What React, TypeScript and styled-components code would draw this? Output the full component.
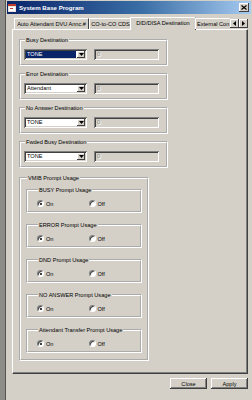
import React from "react";
import styled, { createGlobalStyle } from "styled-components";

const GlobalStyle = createGlobalStyle`
  html, body {
    margin: 0;
    padding: 0;
    background: #8e8d8a;
  }
  body {
    font-family: "Liberation Sans", Arial, sans-serif;
    font-size: 5.6px;
  }
`;

const Window = styled.div`
  box-sizing: border-box;
  margin-left: 5px;
  width: 247px;
  height: 400px;
  background: #d4d0c8;
  border-left: 1px solid #55544f;
  padding: 1px 0 0 1px;
  display: flex;
  flex-direction: column;
`;

const TitleBar = styled.div`
  height: 13px;
  margin-right: 1px;
  background: linear-gradient(90deg, #0a246a 0%, #3a6ea5 55%, #a6caf0 100%);
  display: flex;
  align-items: center;
  padding: 0 2px 0 1px;
  gap: 3px;
`;

const Title = styled.span`
  flex: 1;
  color: #fff;
  font-weight: bold;
  font-size: 6.1px;
`;

const CloseBox = styled.div`
  width: 10px;
  height: 9px;
  background: #d4d0c8;
  box-shadow: inset -1px -1px #404040, inset 1px 1px #fff;
  display: flex;
  align-items: center;
  justify-content: center;
`;

const Body = styled.div`
  flex: 1;
  display: flex;
  flex-direction: column;
  padding: 1px 0 0 5px;
`;

const TabRow = styled.div`
  height: 14px;
  display: flex;
  align-items: flex-end;
  padding-left: 2px;
  position: relative;
  z-index: 1;
`;

const Tab = styled.div<{ $w: number; $active?: boolean }>`
  box-sizing: border-box;
  flex: none;
  width: ${(p) => p.$w}px;
  height: ${(p) => (p.$active ? 13 : 11)}px;
  margin: ${(p) => (p.$active ? "0 -1px -1px -2px" : "0")};
  background: #d4d0c8;
  border-left: 1px solid #fff;
  border-top: 1px solid #fff;
  border-right: 1px solid #404040;
  border-radius: 1px 1px 0 0;
  display: flex;
  align-items: center;
  justify-content: center;
  white-space: nowrap;
  color: #000;
  padding-bottom: ${(p) => (p.$active ? 2 : 0)}px;
`;

const ClippedTab = styled(Tab)`
  justify-content: flex-start;
  padding-left: 1px;
  border-right: none;
`;

const ArrowBtn = styled.div`
  flex: none;
  width: 9px;
  height: 9px;
  margin-bottom: 1px;
  background: #d4d0c8;
  box-shadow: inset -1px -1px #404040, inset 1px 1px #fff;
  display: flex;
  align-items: center;
  justify-content: center;
`;

const Panel = styled.div`
  box-sizing: border-box;
  width: 236px;
  height: 345px;
  border-left: 1px solid #fff;
  border-top: 1px solid #fff;
  border-right: 1px solid #404040;
  border-bottom: 1px solid #404040;
  box-shadow: inset -1px -1px #808080;
  padding: 6px 6px 5px;
  display: flex;
  flex-direction: column;
  align-items: flex-start;
`;

const Group = styled.fieldset<{ $w: number; $top?: number }>`
  box-sizing: border-box;
  width: ${(p) => p.$w}px;
  margin: ${(p) => p.$top ?? 0}px 0 4px 0;
  min-inline-size: 0;
  border: 2px groove #fff;
  padding: 5px 6px 4px 3px;
`;

const Legend = styled.legend`
  line-height: 8px;
  padding: 0 1px;
  margin-left: 1px;
  color: #000;
`;

const Row = styled.div`
  display: flex;
  gap: 7px;
`;

const Combo = styled.div`
  box-sizing: border-box;
  width: 63px;
  height: 11px;
  background: #fff;
  box-shadow: inset 1px 1px #808080, inset -1px -1px #fff, inset 2px 2px #404040,
    inset -2px -2px #d4d0c8;
  padding: 2px;
  display: flex;
`;

const ComboValue = styled.div<{ $selected?: boolean }>`
  flex: 1;
  background: ${(p) => (p.$selected ? "#0a246a" : "#fff")};
  color: ${(p) => (p.$selected ? "#fff" : "#000")};
  line-height: 7px;
  padding-left: 1px;
  margin-right: 1px;
`;

const DropBtn = styled.div`
  width: 8px;
  background: #d4d0c8;
  box-shadow: inset -1px -1px #404040, inset 1px 1px #fff;
  display: flex;
  align-items: center;
  justify-content: center;
`;

const TextBox = styled.div`
  box-sizing: border-box;
  width: 65px;
  height: 11px;
  background: #d4d0c8;
  box-shadow: inset 1px 1px #808080, inset -1px -1px #fff, inset 2px 2px #404040,
    inset -2px -2px #d4d0c8;
  padding: 2px 3px;
  line-height: 7px;
  color: #8a8882;
  text-shadow: 1px 1px #fff;
`;

const VmibGroup = styled(Group)`
  margin-bottom: 0;
  padding: 4px 5px 6px 5px;
  display: flex;
  flex-direction: column;
  gap: 8px;
`;

const PromptGroup = styled.fieldset`
  box-sizing: border-box;
  margin: 0;
  min-inline-size: 0;
  border: 2px groove #fff;
  padding: 5px 0 3px 9px;
`;

const RadioRow = styled.div`
  display: flex;
  height: 9px;
  align-items: center;
`;

const RadioLabel = styled.label`
  display: flex;
  align-items: center;
  gap: 2px;
  width: 67px;
  color: #000;
`;

const RadioDot = styled.span<{ $on?: boolean }>`
  box-sizing: border-box;
  width: 7px;
  height: 7px;
  border-radius: 50%;
  background: #fff;
  border: 1px solid;
  border-color: #808080 #fff #fff #808080;
  box-shadow: inset 1px 1px #404040;
  display: flex;
  align-items: center;
  justify-content: center;
  &::after {
    content: "";
    width: 2px;
    height: 2px;
    border-radius: 50%;
    background: ${(p) => (p.$on ? "#000" : "transparent")};
  }
`;

const Footer = styled.div`
  display: flex;
  justify-content: flex-end;
  gap: 4px;
  padding: 4px 4px 0 0;
`;

const Button = styled.button`
  box-sizing: border-box;
  width: 37px;
  height: 11px;
  padding: 0;
  font: inherit;
  color: #000;
  background: #d4d0c8;
  border: none;
  box-shadow: inset -1px -1px #404040, inset 1px 1px #fff, inset -2px -2px #808080;
`;

const Triangle = ({ dir }: { dir: "down" | "left" | "right" }) => {
  const pts = dir === "down" ? "0,0 5,0 2.5,3" : dir === "left" ? "3,0 3,5 0,2.5" : "0,0 0,5 3,2.5";
  const w = dir === "down" ? 5 : 3;
  const h = dir === "down" ? 3 : 5;
  return (
    <svg width={w} height={h} viewBox={`0 0 ${w} ${h}`}>
      <polygon points={pts} fill="#000" />
    </svg>
  );
};

const AppIcon = () => (
  <svg width="8" height="8" viewBox="0 0 8 8">
    <rect x="0" y="0" width="8" height="8" fill="#e8e4dc" />
    <rect x="0" y="0" width="8" height="2" fill="#c23a2a" />
    <rect x="1" y="3" width="6" height="4" fill="#fff" />
    <rect x="2" y="4" width="3" height="1" fill="#c23a2a" />
  </svg>
);

const destinations = [
  { label: "Busy Destination", value: "TONE", selected: true },
  { label: "Error Destination", value: "Attendant" },
  { label: "No Answer Destination", value: "TONE" },
  { label: "Fwded Busy Destination", value: "TONE" },
];

const prompts = [
  "BUSY Prompt Usage",
  "ERROR Prompt Usage",
  "DND Prompt Usage",
  "NO ANSWER Prompt Usage",
  "Attendant Transfer Prompt Usage",
];

export default function App() {
  return (
    <>
      <GlobalStyle />
      <Window>
        <TitleBar>
          <AppIcon />
          <Title>System Base Program</Title>
          <CloseBox>
            <svg width="6" height="5" viewBox="0 0 6 5">
              <path d="M0.5 0.5 L5.5 4.5 M5.5 0.5 L0.5 4.5" stroke="#000" strokeWidth="1.2" />
            </svg>
          </CloseBox>
        </TitleBar>
        <Body>
          <TabRow>
            <Tab $w={75}>Auto Attendant DVU Annc.#</Tab>
            <Tab $w={43}>CO-to-CO CDS</Tab>
            <Tab $w={66} $active>
              DID/DISA Destination
            </Tab>
            <ClippedTab $w={35}>External Con</ClippedTab>
            <ArrowBtn>
              <Triangle dir="left" />
            </ArrowBtn>
            <ArrowBtn>
              <Triangle dir="right" />
            </ArrowBtn>
          </TabRow>
          <Panel>
            {destinations.map((d) => (
              <Group key={d.label} $w={149}>
                <Legend>{d.label}</Legend>
                <Row>
                  <Combo>
                    <ComboValue $selected={d.selected}>{d.value}</ComboValue>
                    <DropBtn>
                      <Triangle dir="down" />
                    </DropBtn>
                  </Combo>
                  <TextBox>0</TextBox>
                </Row>
              </Group>
            ))}
            <VmibGroup $w={130} $top={2}>
              <Legend>VMIB Prompt Usage</Legend>
              {prompts.map((p) => (
                <PromptGroup key={p}>
                  <Legend>{p}</Legend>
                  <RadioRow>
                    <RadioLabel>
                      <RadioDot $on />
                      On
                    </RadioLabel>
                    <RadioLabel>
                      <RadioDot />
                      Off
                    </RadioLabel>
                  </RadioRow>
                </PromptGroup>
              ))}
            </VmibGroup>
          </Panel>
          <Footer>
            <Button>Close</Button>
            <Button>Apply</Button>
          </Footer>
        </Body>
      </Window>
    </>
  );
}
